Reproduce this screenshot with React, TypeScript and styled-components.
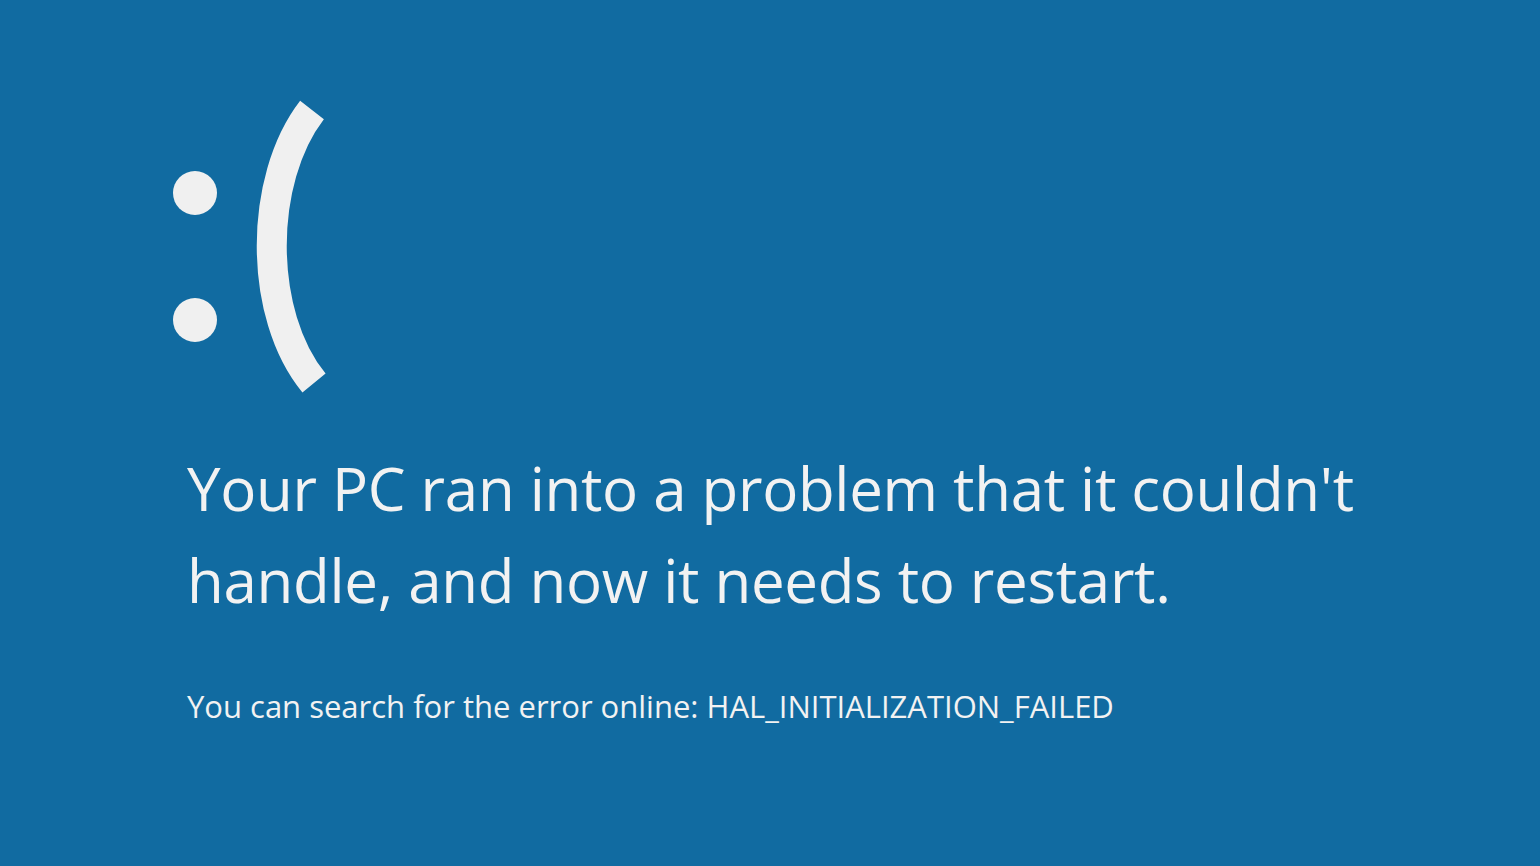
import React from "react";
import styled, { createGlobalStyle } from "styled-components";

const Global = createGlobalStyle`
  html, body { margin: 0; padding: 0; background: #116ba1; }
  body { font-family: "Open Sans", "Noto Sans", sans-serif; color: #f2f2f2; }
`;

const Screen = styled.main`
  width: 1540px;
  height: 866px;
  background: #116ba1;
  box-sizing: border-box;
  padding: 100px 0 0 187px;
  display: flex;
  flex-direction: column;
  overflow: hidden;
`;

const Face = styled.svg`
  display: block;
  width: 180px;
  height: 300px;
  margin-left: -27px;
`;

const Headline = styled.h1`
  margin: 42px 0 0 0;
  font-weight: 400;
  font-size: 60px;
  line-height: 92px;
  letter-spacing: -0.3px;
  width: 1220px;
`;

const Detail = styled.p`
  margin: 60px 0 0 0;
  font-size: 31px;
  line-height: 40px;
  font-weight: 400;
`;

export default function App() {
  return (
    <>
      <Global />
      <Screen>
        <Face viewBox="160 100 180 300">
          <circle cx="195" cy="193" r="22" fill="#f0f0f0" />
          <circle cx="195" cy="320" r="22" fill="#f0f0f0" />
          <path
            d="M312 110 C258 180 258 315 314 383"
            stroke="#f0f0f0"
            strokeWidth="30"
            fill="none"
          />
        </Face>
        <Headline>
          Your PC ran into a problem that it couldn't handle, and now it needs to restart.
        </Headline>
        <Detail>You can search for the error online: HAL_INITIALIZATION_FAILED</Detail>
      </Screen>
    </>
  );
}
